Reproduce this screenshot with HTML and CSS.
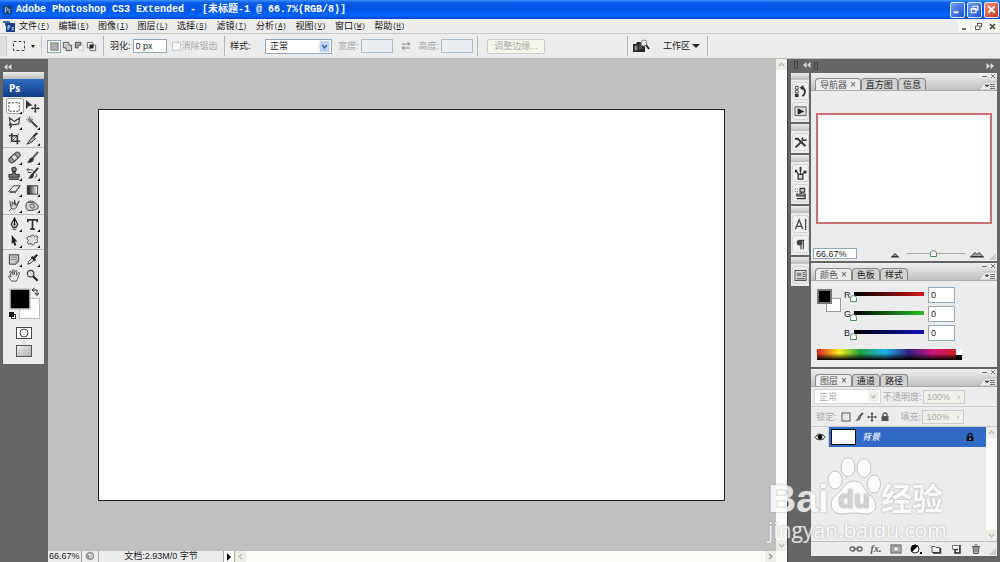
FILE: index.html
```html
<!DOCTYPE html>
<html lang="zh-CN">
<head>
<meta charset="utf-8">
<title>Adobe Photoshop CS3 Extended</title>
<link rel="stylesheet" href="styles.css">
</head>
<body>
<div class="app">
  <header class="titlebar">
    <svg class="app-icon" viewBox="0 0 10 10"><rect width="10" height="10" rx="1" fill="#163f78"/><path d="M2.500 8V2.500h1.500a1.500 1.500 0 0 1 0 3H2.500M8 4.500c-2-.5-2 1.500-.8 1.700 1.200.3 1 1.900-1 1.500" fill="none" stroke="#bcd8f4"/></svg>
    <h1 class="title">Adobe Photoshop CS3 Extended - [未标题-1 @ 66.7%(RGB/8)]</h1>
    <div class="window-buttons">
      <button class="win-btn" aria-label="最小化"><svg viewBox="0 0 14 14"><path d="M3 10h5" stroke="#fff" stroke-width="2"/></svg></button>
      <button class="win-btn" aria-label="还原"><svg viewBox="0 0 14 14"><path d="M5.500 5V3.500h5v4H9M3.500 6.500h5v4h-5zM3 6h6" fill="none" stroke="#fff" stroke-width="1.300"/></svg></button>
      <button class="win-btn win-close" aria-label="关闭"><svg viewBox="0 0 14 14"><path d="M3.500 3.500l7 7m0-7l-7 7" stroke="#fff" stroke-width="2"/></svg></button>
    </div>
  </header>

  <nav class="menubar">
    <svg class="doc-icon" viewBox="0 0 12 12"><path d="M0 1h7v5H2V3H0z" fill="#3975a8"/><rect x="3" y="3" width="9" height="9" fill="#163f86"/><path d="M5 10V5.500h1a1 1 0 0 1 0 2H5M10.500 7.500c-2-.5-1.500 1-.5 1.200s.5 1.500-1.500 1" fill="none" stroke="#cfe3f8" stroke-width=".9"/></svg>
    <div class="menus">
      <button class="menu">文件<span class="key">(<u>F</u>)</span></button>
      <button class="menu">编辑<span class="key">(<u>E</u>)</span></button>
      <button class="menu">图像<span class="key">(<u>I</u>)</span></button>
      <button class="menu">图层<span class="key">(<u>L</u>)</span></button>
      <button class="menu">选择<span class="key">(<u>S</u>)</span></button>
      <button class="menu">滤镜<span class="key">(<u>T</u>)</span></button>
      <button class="menu">分析<span class="key">(<u>A</u>)</span></button>
      <button class="menu">视图<span class="key">(<u>V</u>)</span></button>
      <button class="menu">窗口<span class="key">(<u>W</u>)</span></button>
      <button class="menu">帮助<span class="key">(<u>H</u>)</span></button>
    </div>
    <div class="doc-buttons">
      <button class="doc-btn" aria-label="最小化文档"><svg viewBox="0 0 11 11"><path d="M3 8h4" stroke="#444" stroke-width="1.500"/></svg></button>
      <button class="doc-btn" aria-label="还原文档"><svg viewBox="0 0 11 11"><path d="M4.500 4V2.500h4v3.500H7.500M2.500 5h4.500v3.500H2.500zM4 2.500h5" fill="none" stroke="#555"/></svg></button>
      <button class="doc-btn" aria-label="关闭文档"><svg viewBox="0 0 11 11"><path d="M3 3l5 5m0-5L3 8" stroke="#444" stroke-width="1.700"/></svg></button>
    </div>
  </nav>

  <div class="options">
    <div class="opt grip"></div>
    <div class="opt opt-tool">
      <svg class="ico14" viewBox="0 0 14 14"><rect x="1.500" y="2.500" width="11" height="9" fill="none" stroke="#444" stroke-dasharray="3 2"/></svg>
      <span class="caret"></span>
    </div>
    <div class="opt opt-modes">
      <button class="mode on" aria-label="新选区"><svg viewBox="0 0 12 12"><rect x="2" y="2" width="8" height="8" fill="#b0b0b0" stroke="#777"/></svg></button>
      <button class="mode" aria-label="添加到选区"><svg viewBox="0 0 12 12"><path d="M1.500 1.500h6v3h3v6h-6v-3h-3z" fill="#ccc" stroke="#555"/></svg></button>
      <button class="mode" aria-label="从选区减去"><svg viewBox="0 0 12 12"><path d="M1.500 1.500h6v3h-3v3h-3z" fill="#aaa" stroke="#444"/><path d="M7.500 4.500h3v6h-6v-3" fill="none" stroke="#ccc"/></svg></button>
      <button class="mode" aria-label="与选区交叉"><svg viewBox="0 0 12 12"><path d="M1.500 1.500h6v6h-6zM4.500 4.500h6v6h-6z" fill="none" stroke="#666"/><path d="M4 4h4v4H4z" fill="#222"/></svg></button>
    </div>
    <div class="opt opt-feather">
      <label for="feather">羽化:</label>
      <input class="field" id="feather" value="0 px">
      <input class="tick" type="checkbox" id="aa" disabled>
      <label class="dim" for="aa">消除锯齿</label>
    </div>
    <div class="opt opt-style">
      <label class="style-label" for="style">样式:</label>
      <span class="select-box"><select id="style"><option>正常</option></select><svg class="drop" viewBox="0 0 11 12"><rect width="11" height="12" rx="1" fill="#bdd0f8"/><path d="M3 4.500l2.500 3 2.500-3" fill="none" stroke="#33558f" stroke-width="1.600"/></svg></span>
      <label class="dim" for="w">宽度:</label><input class="field off" id="w" disabled>
      <svg class="swap" viewBox="0 0 10 10"><path d="M1 3h8M6.500 1L9 3 6.500 5M9 7H1M3.500 5L1 7l2.500 2" fill="none" stroke="#888"/></svg>
      <label class="dim" for="h">高度:</label><input class="field off" id="h" disabled>
    </div>
    <div class="opt opt-refine"><button class="refine" disabled>调整边缘...</button></div>
    <div class="opt opt-space">
      <svg class="bridge" viewBox="0 0 18 14"><path d="M1 5h3l1-2h4l1 2h3v8H1z" fill="#2b2b2b"/><path d="M3 7h2v4H3zm4 0h3M7 9h3" fill="#888" stroke="#888" stroke-width=".8"/><circle cx="12" cy="4" r="3" fill="#eee" stroke="#888"/><path d="M14 6l3 4" stroke="#222" stroke-width="1.800"/></svg>
      <button class="space">工作区<span class="caret big"></span></button>
    </div>
    <div class="opt opt-rest"></div>
  </div>

  <main class="workspace">
    <aside class="tool-dock">
      <svg class="fold" viewBox="0 0 8 6"><path d="M3.500 0v6L0 3zM7.500 0v6L4 3z" fill="#ddd"/></svg>
      <div class="toolbox">
        <div class="panel-grip"></div>
        <div class="ps">Ps</div>
        <div class="tools">
          <button class="tool on" aria-label="矩形选框"><svg viewBox="0 0 16 16"><rect x="2" y="4" width="11" height="9" fill="#fff" stroke="#222" stroke-dasharray="2 1.500"/><path d="M16 13v3h-3z"/></svg></button>
          <button class="tool" aria-label="移动"><svg viewBox="0 0 16 16"><path d="M1 1l7 6-4 .5L1 11z" fill="#333"/><path d="M11 6v8M7 10h8" stroke="#333" stroke-width="1.300"/><path d="M9.500 7.500L11 5l1.500 2.500zM9.500 12.500L11 15l1.500-2.500zM8.500 8.500L6 10l2.500 1.500zM13.500 8.500L16 10l-2.500 1.500z" fill="#333"/></svg></button>
          <button class="tool" aria-label="套索"><svg viewBox="0 0 16 16"><path d="M4 13L2.500 3 8 7l5.500-4-1 6.500-6.500 1L4 9.500c-2 0-2 2 0 1.500 1.500 1 0 2-1 3" fill="none" stroke="#444" stroke-width="1.200"/><path d="M16 13v3h-3z"/></svg></button>
          <button class="tool" aria-label="魔棒"><svg viewBox="0 0 16 16"><path d="M6 6l7 7" stroke="#333" stroke-width="2"/><path d="M5 1v8M1 5h8M2.500 2.500l5 5m0-5l-5 5" stroke="#666" stroke-width=".8"/><path d="M16 13v3h-3z"/></svg></button>
          <button class="tool" aria-label="裁剪"><svg viewBox="0 0 16 16"><path d="M5 2v9h9M2 5h9v9" fill="none" stroke="#333" stroke-width="1.700"/><path d="M4 12l9-9" stroke="#555"/></svg></button>
          <button class="tool" aria-label="切片"><svg viewBox="0 0 16 16"><path d="M2 14l6-8 3 2c-2 3-5 5-9 6z" fill="#aaa" stroke="#333"/><path d="M9 6l4-4" stroke="#222" stroke-width="2.200"/><path d="M16 13v3h-3z"/></svg></button>
        </div>
        <div class="tools">
          <button class="tool" aria-label="修复画笔"><svg viewBox="0 0 16 16"><g transform="rotate(-42 8 8)"><rect x="1" y="5" width="14" height="6" rx="3" fill="#999" stroke="#444"/><path d="M5.500 5v6m5-6v6" stroke="#444"/><rect x="6" y="6" width="4" height="4" fill="#ddd"/></g><path d="M16 13v3h-3z"/></svg></button>
          <button class="tool" aria-label="画笔"><svg viewBox="0 0 16 16"><path d="M14 2L8 9" stroke="#555" stroke-width="2"/><path d="M8 8c-4 0-3 4-6 5 4 1.500 7 0 7.500-3.500z" fill="#333"/><path d="M16 13v3h-3z"/></svg></button>
          <button class="tool" aria-label="仿制图章"><svg viewBox="0 0 16 16"><circle cx="7.500" cy="3.800" r="2.500" fill="#777" stroke="#222"/><path d="M6.500 6h2l.5 3h4v3H2V9h4z" fill="#777" stroke="#222"/><path d="M2 14h11" stroke="#222" stroke-width="1.500"/><path d="M16 13v3h-3z"/></svg></button>
          <button class="tool" aria-label="历史画笔"><svg viewBox="0 0 16 16"><path d="M14 2L8 9" stroke="#333" stroke-width="2"/><path d="M9 8c-4 0-3 4-6 5 4 1 6 0 6.500-3.500z" fill="#333"/><path d="M2 4h4c3 0 3 3 5 3M2 4l2-2M2 4l2 2M12 8c1 2 1 4-2 4M3 7h4" fill="none" stroke="#444"/><path d="M16 13v3h-3z"/></svg></button>
          <button class="tool" aria-label="橡皮擦"><svg viewBox="0 0 16 16"><path d="M2 10l5-6h7l-5 7H3z" fill="#eee" stroke="#333"/><path d="M2.500 10H9l4.500-5M9 10v2" fill="none" stroke="#555"/><path d="M16 13v3h-3z"/></svg></button>
          <button class="tool" aria-label="渐变"><svg viewBox="0 0 16 16"><defs><linearGradient id="gr"><stop stop-color="#111"/><stop offset="1" stop-color="#fff"/></linearGradient></defs><rect x="2.500" y="4" width="11" height="9" fill="url(#gr)" stroke="#333"/><path d="M16 13v3h-3z"/></svg></button>
          <button class="tool" aria-label="涂抹"><svg viewBox="0 0 16 16"><path d="M3 3l1 6c0 3 4 4 6 1l3-7-3.500 5L8 2v5L5.500 4v5M5 11l-3 3" fill="#ddd" stroke="#444"/><path d="M16 13v3h-3z"/></svg></button>
          <button class="tool" aria-label="海绵"><svg viewBox="0 0 16 16"><path d="M1 8c0-4 5-6 8-4l5 4v3c-3 2-8 3-11 2C1 12 1 10 1 8zM5 8c1-2 5-2 5 1s-5 2-4 0M10 5L3 4.500" fill="#ccc" stroke="#444"/><path d="M16 13v3h-3z"/></svg></button>
        </div>
        <div class="tools">
          <button class="tool" aria-label="钢笔"><svg viewBox="0 0 16 16"><path d="M8 1L4.500 8l2 3h3l2-3zM8 2v6M6 13h4" fill="#ddd" stroke="#222" stroke-width="1.200"/><circle cx="8" cy="8" r="1"/><path d="M16 13v3h-3z"/></svg></button>
          <button class="tool" aria-label="文字"><svg viewBox="0 0 16 16"><path d="M3 5.500V3h10v2.500M8 3v10M5.500 13h5" fill="none" stroke="#333" stroke-width="1.800"/><path d="M16 13v3h-3z"/></svg></button>
          <button class="tool" aria-label="路径选择"><svg viewBox="0 0 16 16"><path d="M5 2l6 7H8.500l1.500 4-2 .5L6.700 10 5 11.500z" fill="#222"/><path d="M16 13v3h-3z"/></svg></button>
          <button class="tool" aria-label="自定形状"><svg viewBox="0 0 16 16"><path d="M6 4c0-3 4-2 4 0 3-2 5 0 2.500 3 2 2 1 4-2 3-1 3-3 4-4 1-3 2-5 0-3-3C1 6 2 3 6 4z" fill="#ddd" stroke="#444"/><path d="M16 13v3h-3z"/></svg></button>
        </div>
        <div class="tools">
          <button class="tool" aria-label="注释"><svg viewBox="0 0 16 16"><path d="M2.500 3h10v7l-3 3h-7z" fill="#ccc" stroke="#333"/><path d="M4 5.500h7M4 8h7M9.500 13v-3h3" fill="none" stroke="#888"/><path d="M16 13v3h-3z"/></svg></button>
          <button class="tool" aria-label="吸管"><svg viewBox="0 0 16 16"><path d="M3 13l1-3 4-4 2 2-4 4z" fill="#ddd" stroke="#333"/><path d="M7 5l4 4M9.500 6.500L13 3" stroke="#222" stroke-width="2.300"/><path d="M16 13v3h-3z"/></svg></button>
          <button class="tool" aria-label="抓手"><svg viewBox="0 0 16 16"><path d="M5 14L1.500 9.500c0-1 1-1.500 3 0L3 4c0-1 1-1 1.500 0L6 7V2.500c0-1 1.500-1 1.500 0V7L9 3c.5-1 1.500-.5 1.500.5L10 8l2-3c1-1 2 0 1 1.500L11.500 11l-1.500 3z" fill="#eee" stroke="#444" stroke-width=".9"/></svg></button>
          <button class="tool" aria-label="缩放"><svg viewBox="0 0 16 16"><circle cx="6" cy="6" r="3.500" fill="#ddd" stroke="#444" stroke-width="1.300"/><path d="M9 9l4.500 4.500" stroke="#222" stroke-width="2.200"/></svg></button>
        </div>
        <div class="swatches">
          <svg viewBox="0 0 32 34"><rect x="11.500" y="11.500" width="20" height="20" fill="#fff" stroke="#bbb"/><rect x="2" y="2" width="20" height="20" fill="#000" stroke="#ccc" stroke-width="1.500"/><path d="M25 3h4v5M26.500 1L24 3l2.500 2M27 6l2 2.500L31 6" fill="none" stroke="#333"/><rect x="3.500" y="27.500" width="4" height="4" fill="#fff" stroke="#333"/><rect x="1" y="25" width="5" height="5" fill="#111"/></svg>
        </div>
        <button class="wide-tool" aria-label="快速蒙版"><svg viewBox="0 0 20 14"><rect x="2.500" y="1.500" width="15" height="11" fill="#fff" stroke="#444"/><circle cx="10" cy="7" r="4" fill="#f4f4f4" stroke="#444"/></svg></button>
        <button class="wide-tool" aria-label="屏幕模式"><svg viewBox="0 0 20 14"><defs><linearGradient id="sc" x2="1" y2="1"><stop stop-color="#f4f4f4"/><stop offset="1" stop-color="#aaa"/></linearGradient></defs><rect x="2.500" y="1.500" width="15" height="11" fill="url(#sc)" stroke="#555"/></svg></button>
      </div>
    </aside>

    <section class="document">
      <div class="stage"><div class="canvas"></div></div>
      <div class="vscroll">
        <svg class="arrow" viewBox="0 0 11 11"><rect width="11" height="11" fill="#efeee6"/><path d="M3 7l2.500-3L8 7" fill="none" stroke="#bbb" stroke-width="1.300"/></svg>
        <svg class="arrow" viewBox="0 0 11 11"><rect width="11" height="11" fill="#efeee6"/><path d="M3 4l2.500 3L8 4" fill="none" stroke="#bbb" stroke-width="1.300"/></svg>
      </div>
      <div class="status">
        <input class="zoom" aria-label="缩放比例" value="66.67%">
        <div class="st-icon"><svg viewBox="0 0 10 10"><circle cx="5" cy="5" r="4.300" fill="#999"/><path d="M3 3.500h3a1.500 1.500 0 0 1 0 3H5M5 3v4" stroke="#eee" fill="none"/></svg></div>
        <div class="st-text">文档:2.93M/0 字节</div>
        <button class="st-more" aria-label="状态栏菜单"><svg viewBox="0 0 10 10"><path d="M3 1v8l4-4z"/></svg></button>
        <div class="hscroll">
          <svg class="arrow" viewBox="0 0 11 11"><rect width="11" height="11" fill="#efeee6"/><path d="M7 3L4 5.500 7 8" fill="none" stroke="#bbb" stroke-width="1.300"/></svg>
          <svg class="arrow" viewBox="0 0 11 11"><rect width="11" height="11" fill="#efeee6"/><path d="M4 3l3 2.500L4 8" fill="none" stroke="#999" stroke-width="1.300"/></svg>
        </div>
      </div>
    </section>

    <aside class="icon-dock">
      <div class="dock-top"><i class="handle"></i><svg class="fold" viewBox="0 0 8 6"><path d="M3.500 0v6L0 3zM7.500 0v6L4 3z" fill="#ddd"/></svg></div>
      <div class="icon-group"><div class="panel-grip"></div>
        <button class="dock-btn" aria-label="历史记录"><svg viewBox="0 0 14 14"><path d="M1.500 1.500h3v3h-3zM1.500 5.500h3v3h-3z" fill="#fff" stroke="#444"/><path d="M1 9.500h4v3.500H1z" fill="#333"/><path d="M8 3h2c3 3 2 7-1 9" fill="none" stroke="#333" stroke-width="2"/><path d="M6 3l4-3v6z" fill="#333"/></svg></button>
        <button class="dock-btn" aria-label="动作"><svg viewBox="0 0 14 14"><rect x="1" y="2" width="12" height="9.500" fill="#ddd" stroke="#555"/><path d="M4 3.500v7L11 7z" fill="#222"/></svg></button>
      </div>
      <div class="icon-group"><div class="panel-grip"></div>
        <button class="dock-btn" aria-label="工具预设"><svg viewBox="0 0 14 14"><path d="M1 3l3 0 8.500 8" fill="none" stroke="#333" stroke-width="2"/><path d="M1.500 12.500L9 5.500" stroke="#444" stroke-width="2.200"/><path d="M9.500 1.500c-1.500 2 0 4 4 2.500" fill="none" stroke="#333" stroke-width="1.800"/></svg></button>
      </div>
      <div class="icon-group"><div class="panel-grip"></div>
        <button class="dock-btn" aria-label="画笔面板"><svg viewBox="0 0 14 14"><path d="M4.500 8h5v5h-5z" fill="#ddd" stroke="#333" stroke-width="1.400"/><path d="M5 8L2 4M7 8V3M9 8l3-4" stroke="#333" stroke-width="1.200"/><path d="M1 3h2.500v3H1zM6 0h2v4H6zM10.500 4h3v3h-3z" fill="#333"/></svg></button>
        <button class="dock-btn" aria-label="仿制源"><svg viewBox="0 0 14 14"><path d="M1 2h4M1 5h4" stroke="#444" stroke-dasharray="1 1"/><path d="M6.500 1.500h5v4h-5zM8 5.500v2H3v2h9v-2H9M3 12.500h9v-3" fill="#ccc" stroke="#333" stroke-width="1.200"/></svg></button>
      </div>
      <div class="icon-group"><div class="panel-grip"></div>
        <button class="dock-btn" aria-label="字符"><svg viewBox="0 0 14 14"><path d="M1.500 12L5.500 2l4 10M3 9h5M12.500 1v12" fill="none" stroke="#444" stroke-width="1.400"/></svg></button>
        <button class="dock-btn" aria-label="段落"><svg viewBox="0 0 14 14"><path d="M7.500 12V2.500M10 12V2.500M11 2.500H7" stroke="#444" stroke-width="1.300"/><circle cx="6" cy="5" r="3" fill="#444"/></svg></button>
      </div>
      <div class="icon-group"><div class="panel-grip"></div>
        <button class="dock-btn" aria-label="图层复合"><svg viewBox="0 0 14 14"><rect x="1" y="1.500" width="12" height="11" fill="#ddd" stroke="#444"/><path d="M3 4h5v4H3z" fill="#888"/><path d="M9.500 4h2M9.500 6h2M9.500 8h2M3 10.500h8.500" stroke="#333"/></svg></button>
      </div>
    </aside>

    <aside class="panels">
      <div class="dock-top"><i class="handle"></i><svg class="fold end" viewBox="0 0 8 6"><path d="M.5 0v6L4 3zM4.500 0v6L8 3z" fill="#ddd"/></svg></div>

      <section class="panel">
        <div class="tabs">
          <button class="tab on">导航器<span class="x">×</span></button><button class="tab">直方图</button><button class="tab">信息</button>
          <svg class="panel-ctl" viewBox="0 0 20 18"><path d="M5 4.500h5M14 2l4 4m0-4l-4 4" stroke="#777"/><path d="M0 18c5 0 5-8 10-8h10v8z" fill="#ececec" stroke="#aaa" stroke-width=".7"/><path d="M8 13h4l-2 2zM13 12.500h5m-5 2h5m-5 2h5" fill="#444" stroke="#555" stroke-width=".8"/></svg>
        </div>
        <div class="nav-body"><div class="thumb"></div></div>
        <div class="nav-foot">
          <input class="field nav-zoom" aria-label="导航器缩放" value="66.67%">
          <svg class="mount" viewBox="0 0 14 8"><path d="M3 7h8M4 6.500l3-3 3 3z" fill="#999" stroke="#333"/></svg>
          <input class="nav-range" type="range" aria-label="缩放" value="46">
          <svg class="mount" viewBox="0 0 14 8"><path d="M0 7h14M1 6.500l4-4 2 2 2-2 4 4z" fill="#aaa" stroke="#333"/></svg>
          <svg class="corner" viewBox="0 0 8 8"><path d="M8 0v8H0z" fill="#ccc"/></svg>
        </div>
      </section>

      <section class="panel">
        <div class="tabs">
          <button class="tab on">颜色<span class="x">×</span></button><button class="tab">色板</button><button class="tab">样式</button>
          <svg class="panel-ctl" viewBox="0 0 20 18"><path d="M5 4.500h5M14 2l4 4m0-4l-4 4" stroke="#777"/><path d="M0 18c5 0 5-8 10-8h10v8z" fill="#ececec" stroke="#aaa" stroke-width=".7"/><path d="M8 13h4l-2 2zM13 12.500h5m-5 2h5m-5 2h5" fill="#444" stroke="#555" stroke-width=".8"/></svg>
        </div>
        <div class="color-body">
          <svg class="pair" viewBox="0 0 24 24"><rect x="9.500" y="9.500" width="14" height="13" fill="#fff" stroke="#999"/><rect x="1" y="1" width="13" height="13" fill="#000" stroke="#777" stroke-width="2"/></svg>
          <div class="channels">
            <div class="channel"><label for="r">R</label><input class="chan red" type="range" aria-label="红" min="0" max="255" value="0"><input class="field num" id="r" value="0"></div>
            <div class="channel"><label for="g">G</label><input class="chan green" type="range" aria-label="绿" min="0" max="255" value="0"><input class="field num" id="g" value="0"></div>
            <div class="channel"><label for="b">B</label><input class="chan blue" type="range" aria-label="蓝" min="0" max="255" value="0"><input class="field num" id="b" value="0"></div>
          </div>
        </div>
        <div class="spectrum"><i class="ramp"></i><i class="ends"></i></div>
      </section>

      <section class="panel grow">
        <div class="tabs">
          <button class="tab on">图层<span class="x">×</span></button><button class="tab">通道</button><button class="tab">路径</button>
          <svg class="panel-ctl" viewBox="0 0 20 18"><path d="M5 4.500h5M14 2l4 4m0-4l-4 4" stroke="#777"/><path d="M0 18c5 0 5-8 10-8h10v8z" fill="#ececec" stroke="#aaa" stroke-width=".7"/><path d="M8 13h4l-2 2zM13 12.500h5m-5 2h5m-5 2h5" fill="#444" stroke="#555" stroke-width=".8"/></svg>
        </div>
        <div class="layer-opts dim">
          <span class="select-box faded"><select aria-label="混合模式" disabled><option>正常</option></select><svg class="drop" viewBox="0 0 11 12"><rect width="11" height="12" fill="#efeee6"/><path d="M3 4.500l2.500 3 2.500-3" fill="none" stroke="#bbb" stroke-width="1.400"/></svg></span>
          <span>不透明度:</span><button class="pct" disabled>100%<span class="gt">›</span></button>
        </div>
        <div class="layer-opts dim">
          <span class="lock-label">锁定:</span>
          <svg class="lock" viewBox="0 0 10 10"><rect x="1" y="1" width="8" height="8" fill="#eee" stroke="#555"/><path d="M3 3h1m2 0h1M3 6.500h1m2 0h1" stroke="#bbb"/></svg>
          <svg class="lock" viewBox="0 0 10 10"><path d="M9 1L5 5" stroke="#555" stroke-width="1.800"/><path d="M6 4C3 4 4 7 1 9c4 0 6-1 6-4z" fill="#777"/></svg>
          <svg class="lock" viewBox="0 0 10 10"><path d="M5 1v8M1 5h8" stroke="#444" stroke-width="1.200"/><path d="M3.500 2L5 0l1.500 2zM3.500 8L5 10l1.500-2zM2 3.500L0 5l2 1.500zM8 3.500L10 5 8 6.500z" fill="#444"/></svg>
          <svg class="lock" viewBox="0 0 10 10"><path d="M3 5V3a2 2 0 0 1 4 0v2" fill="none" stroke="#555" stroke-width="1.300"/><rect x="1.500" y="4" width="7" height="5" fill="#555"/></svg>
          <span class="fill-label">填充:</span><button class="pct" disabled>100%<span class="gt">›</span></button>
        </div>
        <div class="layers">
          <div class="layer-list">
            <div class="layer">
              <button class="eye" aria-label="可见性"><svg viewBox="0 0 12 10"><path d="M1 5.500C3 2 8 1 11 5M1 5.500c2 3 8 3 10 0" fill="#eee" stroke="#222"/><circle cx="6" cy="5" r="2.300"/><path d="M2 3l1 1m2-3v1m4 0L8 3" stroke="#333" stroke-width=".7"/></svg></button>
              <div class="layer-main"><span class="layer-thumb"></span><span class="layer-name">背景</span><svg class="lock" viewBox="0 0 10 10"><path d="M3 5V3.500a2 2 0 0 1 4 0V5" fill="none" stroke="#111" stroke-width="1.300"/><rect x="1.500" y="4.500" width="7" height="4.500" fill="#111"/><path d="M5 6v2" stroke="#ddd"/></svg></div>
            </div>
          </div>
          <div class="vscroll">
            <svg class="arrow" viewBox="0 0 11 11"><rect width="11" height="11" fill="#efeee6"/><path d="M3 7l2.500-3L8 7" fill="none" stroke="#bbb" stroke-width="1.300"/></svg>
            <svg class="arrow" viewBox="0 0 11 11"><rect width="11" height="11" fill="#efeee6"/><path d="M3 4l2.500 3L8 4" fill="none" stroke="#bbb" stroke-width="1.300"/></svg>
          </div>
        </div>
        <div class="layer-foot">
          <button class="foot-btn" aria-label="链接"><svg viewBox="0 0 14 12"><rect x="1" y="4" width="5" height="4" rx="2" fill="none" stroke="#666" stroke-width="1.300"/><rect x="8" y="4" width="5" height="4" rx="2" fill="none" stroke="#666" stroke-width="1.300"/><path d="M4 6h6" stroke="#666"/></svg></button>
          <button class="foot-btn fx" aria-label="图层样式">fx<span>.</span></button>
          <button class="foot-btn" aria-label="蒙版"><svg viewBox="0 0 14 12"><rect x="2" y="2" width="10" height="8" fill="#bbb" stroke="#555"/><circle cx="7" cy="6" r="2.500" fill="#fff" stroke="#777"/></svg></button>
          <button class="foot-btn" aria-label="调整图层"><svg viewBox="0 0 14 12"><circle cx="6" cy="6" r="4" fill="#fff" stroke="#222"/><path d="M9 3a4 4 0 1 0-6 6z"/><path d="M11 9h2v2h-2z"/></svg></button>
          <button class="foot-btn" aria-label="新建组"><svg viewBox="0 0 14 12"><path d="M3 3.500h3l1 1h4V9.500H3z" fill="#eee" stroke="#555"/><path d="M11.500 5v5H4" fill="none" stroke="#333" stroke-width="1.500"/></svg></button>
          <button class="foot-btn" aria-label="新建图层"><svg viewBox="0 0 14 12"><path d="M3.500 2.500h7v7h-4v-3h-3z" fill="#fff" stroke="#777"/><path d="M11 2v8H6V6.500h3" fill="none" stroke="#333" stroke-width="1.500"/></svg></button>
          <button class="foot-btn" aria-label="删除"><svg viewBox="0 0 14 12"><path d="M4 4l.7 6.500h4.600L10 4zM3 3.500h8M5.500 2h3M6 5v4m2-4v4" fill="#ccc" stroke="#555"/></svg></button>
          <svg class="corner" viewBox="0 0 8 8"><path d="M8 0v8H0z" fill="#ccc"/></svg>
        </div>
      </section>
    </aside>
  </main>

  <div class="watermark">
    <div class="wm-brand">
      <span class="wm-bai">Bai</span>
      <span class="wm-paw"><svg viewBox="0 0 54 60"><g fill="#fff" stroke="#bbb"><ellipse cx="8" cy="24" rx="7" ry="9"/><ellipse cx="21" cy="11" rx="7" ry="9.500"/><ellipse cx="37" cy="12" rx="7" ry="9.500"/><ellipse cx="47" cy="28" rx="6.500" ry="9"/><path d="M27 25c9 0 10 9 16 14 8 6 8 18-3 19-5 0-8-1-13-1s-9 1-13 1C2 57 2 44 9 39c7-5 9-14 18-14z"/></g></svg><span class="wm-du">du</span></span>
      <span class="wm-cn">经验</span>
    </div>
    <div class="wm-url">jingyan.baidu.com</div>
  </div>
</div>
</body>
</html>
```
FILE: styles.css
```css
* { box-sizing: border-box; }

body {
  margin: 0;
  font: 9px/12px "Liberation Sans", "Noto Sans CJK SC", sans-serif;
  color: #222;
}

button, input, select { font: inherit; color: inherit; margin: 0; padding: 0; border: 0; background: none; border-radius: 0; min-width: 0; }
button { display: flex; align-items: center; justify-content: center; }
svg { display: block; flex: none; }
i { display: block; }

.app {
  position: relative;
  display: flex;
  flex-direction: column;
  height: 100vh;
  overflow: hidden;
  background: #ececec;
}

.titlebar {
  display: flex;
  align-items: center;
  flex: none;
  height: 19px;
  padding: 0 1px 0 3px;
  gap: 4px;
  background: linear-gradient(#3a94ff, #0a5be8 15%, #0054e3 45%, #0066ff 80%, #0048c8);
}
.app-icon { width: 9px; height: 10px; }
.title { flex: 1; margin: 0; font: bold 10px/16px "Liberation Mono", "Noto Sans CJK SC", monospace; color: #fff; white-space: nowrap; }
.window-buttons { display: flex; gap: 2px; }
.win-btn { width: 15px; height: 16px; border: 1px solid #dce8ff; border-radius: 2px; background: linear-gradient(135deg, #6f9df5, #1c4fd0); }
.win-btn svg { width: 13px; height: 13px; }
.win-close { background: linear-gradient(135deg, #f09070, #c8341c); }

.menubar { display: flex; align-items: center; flex: none; height: 15px; padding: 0 2px 0 3px; border-bottom: 1px solid #c8c8c8; background: #ededed; }
.doc-icon { width: 12px; height: 12px; margin-right: 4px; }
.menus { display: flex; justify-content: space-between; flex: 0 1 386px; }
.menu { font-size: 9px; white-space: nowrap; color: #111; }
.key { font: 7px/12px "Liberation Mono", monospace; }
.doc-buttons { display: flex; gap: 2px; margin-left: auto; }
.doc-btn { width: 12px; height: 12px; background: #f8f8f0; }
.doc-btn svg { width: 11px; height: 11px; }

.options { display: flex; flex: none; height: 25px; border-bottom: 1px solid #bbb; background: #ececec; }
.opt { display: flex; align-items: center; flex: none; margin: 2px 0; border-right: 1px solid #b4b4b4; white-space: nowrap; }
.grip { width: 7px; background: #ddd; }
.opt-tool { width: 35px; padding-left: 5px; gap: 5px; }
.ico14 { width: 14px; height: 14px; }
.caret { border: 2px solid transparent; border-top: 3px solid #222; border-bottom: 0; }
.caret.big { border-width: 4px 4px 0; margin-left: 2px; }
.opt-modes { width: 62px; padding-left: 5px; }
.opt-tool, .grip { border-right-color: #ccc; }
.mode { width: 12px; height: 13px; }
.mode svg { width: 11px; height: 11px; }
.mode.on { width: 14px; border: 1px solid #8fa3b8; background: #fff; }
.opt-feather { width: 121px; padding-left: 6px; }
.field { height: 14px; padding: 0 2px; border: 1px solid #8ea9bf; background: #fff; }
#feather { width: 34px; margin: 0 5px 0 2px; }
.tick { appearance: none; width: 9px; height: 9px; margin-right: 1px; border: 1px solid #ccc; background: #f8f8f8; }
.dim { color: #aaa; }
.opt-style { width: 253px; padding-left: 5px; }
.style-label { width: 35px; }
.select-box { position: relative; display: flex; width: 67px; height: 15px; margin-right: 6px; border: 1px solid #8ea9bf; background: #fff; }
.select-box select { appearance: none; width: 100%; padding: 0 4px; }
.drop { position: absolute; top: 1px; right: 1px; width: 11px; height: 11px; }
.off { width: 32px; margin-left: 2px; border-color: #a9bccb; background: #e8edf2; }
.swap { width: 10px; height: 10px; margin: 0 8px; }
.opt-refine { width: 150px; padding-left: 9px; }
.refine { width: 58px; height: 15px; border: 1px solid #ccc; border-radius: 2px; background: #f5f5ea; color: #aaa; }
.opt-space { width: 80px; padding-left: 4px; gap: 13px; }
.bridge { width: 18px; height: 14px; }
.opt-rest { flex: 1; border-right: 0; }

.workspace { display: flex; flex: 1; min-height: 0; background: #656565; }
.fold { width: 8px; height: 6px; }

.tool-dock { flex: none; width: 48px; padding: 4px 4px 0 3px; }
.tool-dock .fold { margin: 1px 0 2px 1px; }
.toolbox { display: flex; flex-direction: column; align-items: center; padding-bottom: 4px; background: #ececec; border-radius: 1px; }
.panel-grip { align-self: stretch; height: 7px; background: linear-gradient(#eee, #bbb); }
.ps { align-self: stretch; height: 18px; padding-left: 6px; background: linear-gradient(#2f6cc0, #123c88); color: #fff; font: bold 10px/18px "Open Sans", sans-serif; }
.tools { display: grid; grid-template-columns: 18px 18px; justify-content: center; align-self: stretch; padding: 1px 0; border-bottom: 1px solid #bbb; }
.tools:nth-of-type(6) { border-bottom: 0; }
.tool { width: 18px; height: 16px; }
.tool svg { width: 15px; height: 15px; }
.tool.on { border: 1px solid #99a9ba; border-radius: 2px; background: #fff; }
.swatches { margin: 3px 0; }
.swatches svg { width: 32px; height: 34px; }
.wide-tool { height: 18px; }
.wide-tool svg { width: 20px; height: 14px; }

.document { display: grid; flex: 1; min-width: 0; grid-template-columns: 1fr 11px; grid-template-rows: 1fr 11px; background: #fbfbf7; }
.stage { display: grid; padding: 50px 51px 50px 50px; background: #c0c0c0; }
.canvas { border: 1px solid #222; background: #fff; }
.vscroll { display: flex; flex-direction: column; justify-content: space-between; background: #fbfbf7; }
.arrow { width: 11px; height: 11px; }
.status { display: flex; height: 11px; background: #ececec; line-height: 11px; white-space: nowrap; }
.zoom { width: 34px; padding-left: 1px; border-right: 1px solid #999; }
.st-icon { width: 17px; padding-left: 3px; border-right: 1px solid #aaa; }
.st-icon svg { width: 10px; height: 10px; }
.st-text { width: 125px; text-align: center; border-right: 1px solid #aaa; }
.st-more { width: 11px; border-right: 1px solid #aaa; background: #fff; }
.st-more svg { width: 10px; height: 10px; }
.hscroll { display: flex; flex: 1; justify-content: space-between; background: #fbfbf7; }

.icon-dock { display: flex; flex-direction: column; flex: none; gap: 2px; width: 24px; padding: 0 2px 0 3px; border-left: 1px solid #444; }
.dock-top { display: flex; align-items: center; flex: none; gap: 5px; height: 14px; padding: 0 3px; }
.icon-dock .dock-top { height: 12px; }
.handle { flex: none; width: 4px; height: 8px; border: 1px solid #444; }
.end { margin-left: auto; }
.icon-group { display: flex; flex-direction: column; align-items: center; padding-bottom: 2px; background: #ececec; }
.dock-btn { width: 17px; height: 18px; margin-top: 2px; border: 1px solid #d4d4d4; border-radius: 3px; background: #f0f0f0; }
.dock-btn svg { width: 13px; height: 13px; }

.panels { display: flex; flex-direction: column; flex: none; width: 189px; padding: 0 3px 6px 0; }
.panel { display: flex; flex-direction: column; margin-bottom: 2px; background: #ececec; }
.grow { flex: 1; margin-bottom: 0; }
.tabs { display: flex; align-items: flex-end; flex: none; height: 18px; padding: 0 0 0 4px; background: linear-gradient(#f0f0f0, #c0c0c0); border-bottom: 1px solid #aaa; }
.tab { height: 12px; padding: 0 4px; border: 1px solid #888; border-bottom: 0; border-radius: 4px 4px 0 0; background: #d2d2d2; white-space: nowrap; }
.tab.on { background: #ececec; color: #555; }
.x { margin-left: 3px; font-size: 10px; }
.panel-ctl { width: 20px; height: 18px; margin-left: auto; }

.nav-body { display: grid; height: 155px; padding: 22px 5px; }
.thumb { border: 2px solid #c96f6f; background: #fff; }
.nav-foot { display: flex; align-items: center; height: 15px; padding-left: 2px; }
.nav-zoom { width: 44px; height: 11px; margin-right: 31px; padding: 0 2px; line-height: 9px; }
.mount { width: 14px; height: 8px; }
.nav-range { appearance: none; flex: 1; margin: 0 5px; height: 10px; background: linear-gradient(#aaa, #aaa) center / 100% 1px no-repeat; }
.corner { width: 7px; height: 7px; margin: auto 1px 1px 5px; }
input[type="range"]::-webkit-slider-thumb { appearance: none; width: 7px; height: 7px; border: 1px solid #4b9555; border-radius: 4px 4px 0 0; background: #fff; }

.color-body { display: flex; gap: 3px; padding: 6px 5px 0 6px; }
.pair { width: 24px; height: 24px; margin-top: 2px; }
.channels { display: flex; flex-direction: column; gap: 3px; }
.channel { display: flex; align-items: center; height: 16px; }
.channel label { width: 6px; }
.chan { appearance: none; display: flex; align-items: flex-end; width: 78px; height: 14px; background-repeat: no-repeat; background-position: 4px 4px; background-size: 70px 4px; }
.chan::-webkit-slider-runnable-track { margin-top: 8px; }
.red { background-image: linear-gradient(90deg, #000, #d01818); }
.green { background-image: linear-gradient(90deg, #000, #28c028); }
.blue { background-image: linear-gradient(90deg, #000, #1010c0); }
.num { width: 27px; height: 16px; }
.spectrum { display: flex; width: 145px; height: 11px; margin: 8px 6px 7px; }
.ramp { flex: 1; background: linear-gradient(transparent 40%, #000), linear-gradient(90deg, #e02020, #f8f020 16%, #20a040 31%, #20b0e8 49%, #302080 66%, #d01880 83%, #d02020); }
.ends { width: 6px; background: linear-gradient(#fff 50%, #000 50%); }

.layer-opts { display: flex; align-items: center; flex: none; height: 20px; padding-left: 3px; border-bottom: 1px solid #ccc; white-space: nowrap; }
.faded { margin-right: 2px; border-color: #d4d4d4; }
.faded select { color: #aaa; opacity: 1; }
.pct { width: 42px; height: 14px; margin-left: 1px; gap: 7px; border: 1px solid #ccc; background: #f0f0e8; color: #aaa; }
.lock { width: 10px; height: 10px; margin-right: 3px; }
.lock-label { width: 27px; padding-left: 2px; }
.fill-label { width: 28px; text-align: right; }
.layers { display: flex; flex: 1; min-height: 0; }
.layer-list { flex: 1; }
.layer { display: flex; height: 20px; }
.eye { width: 18px; border-right: 1px solid #ccc; }
.eye svg { width: 12px; height: 10px; }
.layer-main { display: flex; align-items: center; flex: 1; padding: 0 8px 0 2px; background: #316ac5; }
.layer-thumb { width: 25px; height: 16px; border: 1px solid #111; background: #fff; }
.layer-name { flex: 1; padding-left: 6px; color: #fff; font-style: italic; }
.layer-foot { display: flex; align-items: center; flex: none; gap: 6px; height: 15px; padding-left: 38px; border-top: 1px solid #bbb; }
.foot-btn { width: 14px; height: 12px; }
.foot-btn svg { width: 14px; height: 12px; }
.fx { font: italic bold 10px/12px "Liberation Serif", serif; color: #555; }
.layer-foot .corner { margin: auto 1px 1px auto; }

/* Site mark laid over the lower right of the window */
.watermark { position: absolute; right: 54px; bottom: 20px; width: 178px; opacity: .8; color: #fff; pointer-events: none; }
.wm-brand { display: flex; align-items: flex-end; height: 62px; margin-bottom: 2px; text-shadow: 0 0 2px #888; }
.wm-bai { width: 59px; font: bold 39px/34px "Liberation Sans", sans-serif; }
.wm-paw { position: relative; width: 54px; }
.wm-paw svg { width: 54px; height: 60px; }
.wm-du { position: absolute; left: 11px; bottom: 4px; font: bold 26px/26px "Liberation Sans", sans-serif; color: #ccc; }
.wm-cn { font: bold 31px/38px "Noto Sans CJK SC", sans-serif; }
.wm-url { font: 21px/24px "Open Sans", sans-serif; text-shadow: 0 0 2px #888; }
```
